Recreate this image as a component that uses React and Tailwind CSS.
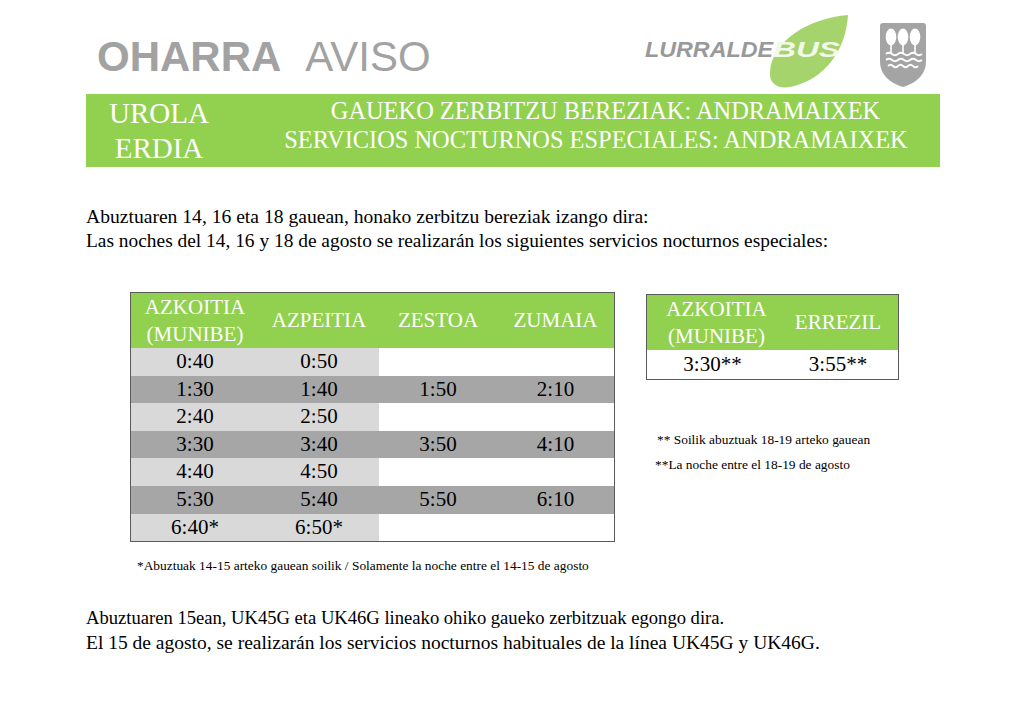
import React from "react";

const serif = { fontFamily: '"Liberation Serif", "Times New Roman", serif' };

function LurraldeLogo() {
  return (
    <svg width="212" height="80" viewBox="0 0 212 80" className="mt-[10px] shrink-0">
      <path d="M 208 5 C 170 8, 132 30, 130 62 C 129 74, 138 79, 150 77 C 185 70, 206 40, 208 5 Z" fill="#a5d46c" />
      <text
        x="5"
        y="47"
        fontFamily='"Liberation Sans", Arial, sans-serif'
        fontWeight="700"
        fontStyle="italic"
        fontSize="22"
        fill="#999999"
        textLength="128"
        lengthAdjust="spacingAndGlyphs"
      >
        LURRALDE
      </text>
      <text
        x="133"
        y="47"
        fontFamily='"Liberation Sans", Arial, sans-serif'
        fontWeight="700"
        fontStyle="italic"
        fontSize="22"
        fill="#f2f8ea"
        textLength="67"
        lengthAdjust="spacingAndGlyphs"
      >
        BUS
      </text>
    </svg>
  );
}

function Shield() {
  return (
    <svg width="46" height="64" viewBox="0 0 46 64" className="mt-[23px] ml-[28px] shrink-0">
      <path d="M0 3 Q0 0 3 0 H43 Q46 0 46 3 V38 C46 52 36 60 23 64 C10 60 0 52 0 38 Z" fill="#a4a4a4" />
      <ellipse cx="11" cy="14" rx="5.3" ry="8.5" fill="#fff" />
      <ellipse cx="23" cy="14" rx="5.3" ry="8.5" fill="#fff" />
      <ellipse cx="35" cy="14" rx="5.3" ry="8.5" fill="#fff" />
      <path d="M11 21 V30 M23 21 V30 M35 21 V30" stroke="#fff" strokeWidth="1.6" />
      <path d="M6 31 q3 -2.5 6 0 t6 0 t6 0 t6 0 t6 0 t6 0" stroke="#fff" strokeWidth="1.8" fill="none" />
      <path d="M6 37 q3 -2.5 6 0 t6 0 t6 0 t6 0 t6 0 t6 0" stroke="#fff" strokeWidth="1.8" fill="none" />
      <path d="M8 43 q2.5 -2.5 5 0 t5 0 t5 0 t5 0 t5 0 t5 0" stroke="#fff" strokeWidth="1.8" fill="none" />
    </svg>
  );
}

const rows = [
  ["0:40", "0:50", "", "", false],
  ["1:30", "1:40", "1:50", "2:10", true],
  ["2:40", "2:50", "", "", false],
  ["3:30", "3:40", "3:50", "4:10", true],
  ["4:40", "4:50", "", "", false],
  ["5:30", "5:40", "5:50", "6:10", true],
  ["6:40*", "6:50*", "", "", false],
];

function MainTable() {
  return (
    <div className="w-[485px] border border-[#5a5a5a] text-[21px]" style={serif}>
      <div className="flex h-[55px] bg-[#92d050] text-white leading-[27px]">
        <div className="w-[128px] flex items-center justify-center text-center">
          AZKOITIA
          <br />
          (MUNIBE)
        </div>
        <div className="w-[120px] flex items-center justify-center">AZPEITIA</div>
        <div className="w-[118px] flex items-center justify-center">ZESTOA</div>
        <div className="w-[117px] flex items-center justify-center">ZUMAIA</div>
      </div>
      {rows.map((r, i) => {
        const dark = r[4];
        return (
          <div key={i} className="flex h-[27.6px] leading-[27.6px] text-black">
            <div className={"w-[128px] text-center " + (dark ? "bg-[#a6a6a6]" : "bg-[#d9d9d9]")}>{r[0]}</div>
            <div className={"w-[120px] text-center " + (dark ? "bg-[#a6a6a6]" : "bg-[#d9d9d9]")}>{r[1]}</div>
            <div className={"w-[118px] text-center " + (dark ? "bg-[#a6a6a6]" : "bg-white")}>{r[2]}</div>
            <div className={"w-[117px] text-center " + (dark ? "bg-[#a6a6a6]" : "bg-white")}>{r[3]}</div>
          </div>
        );
      })}
    </div>
  );
}

function SideTable() {
  return (
    <div className="w-[253px] border border-[#5a5a5a] text-[21px]" style={serif}>
      <div className="flex h-[55px] bg-[#92d050] text-white leading-[27px]">
        <div className="w-[131px] flex items-center justify-center text-center pl-[8px]">
          AZKOITIA
          <br />
          (MUNIBE)
        </div>
        <div className="w-[120px] flex items-center justify-center">ERREZIL</div>
      </div>
      <div className="flex h-[29px] leading-[29px] bg-white text-black">
        <div className="w-[131px] text-center">3:30**</div>
        <div className="w-[120px] text-center">3:55**</div>
      </div>
    </div>
  );
}

export default function App() {
  return (
    <div className="w-[1024px] h-[720px] bg-white overflow-hidden text-black">
      {/* header */}
      <div className="flex items-start h-[94px]">
        <div
          className="w-[640px] shrink-0 pl-[97px] pt-[35px] text-[42px] leading-[43px] text-[#a2a2a2] whitespace-nowrap"
          style={{ fontFamily: '"Liberation Sans", Arial, sans-serif' }}
        >
          <span className="font-bold">OHARRA</span>
          <span className="ml-[24px]">AVISO</span>
        </div>
        <LurraldeLogo />
        <Shield />
      </div>

      {/* green bar */}
      <div className="ml-[86px] w-[854px] h-[73px] bg-[#92d050] flex text-white" style={serif}>
        <div className="w-[146px] flex items-center justify-center text-center text-[29px] leading-[35px]">
          UROLA
          <br />
          ERDIA
        </div>
        <div className="flex-1 flex flex-col items-center justify-center text-[24.4px] leading-[29px] pb-[11px] pl-[20px] whitespace-nowrap">
          <div className="pl-[19px]">GAUEKO ZERBITZU BEREZIAK: ANDRAMAIXEK</div>
          <div>SERVICIOS NOCTURNOS ESPECIALES: ANDRAMAIXEK</div>
        </div>
      </div>

      {/* intro paragraph */}
      <div className="ml-[86px] mt-[38px] text-[19.4px] leading-[24px] whitespace-nowrap" style={serif}>
        <div className="text-[19.6px]">Abuztuaren 14, 16 eta 18 gauean, honako zerbitzu bereziak izango dira:</div>
        <div>Las noches del 14, 16 y 18 de agosto se realizarán los siguientes servicios nocturnos especiales:</div>
      </div>

      {/* tables */}
      <div className="flex items-start mt-[39px] ml-[130px]">
        <div className="flex flex-col">
          <MainTable />
          <div className="mt-[16px] ml-[7px] text-[13.4px] leading-[16px] whitespace-nowrap" style={serif}>
            *Abuztuak 14-15 arteko gauean soilik / Solamente la noche entre el 14-15 de agosto
          </div>
        </div>
        <div className="flex flex-col ml-[31px] mt-[2px]">
          <SideTable />
          <div className="mt-[52px] ml-[11px] text-[13.4px] leading-[16px] whitespace-nowrap" style={serif}>
            ** Soilik abuztuak 18-19 arteko gauean
          </div>
          <div className="mt-[9px] ml-[9px] text-[13.4px] leading-[16px] whitespace-nowrap" style={serif}>
            **La noche entre el 18-19 de agosto
          </div>
        </div>
      </div>

      {/* bottom paragraph */}
      <div className="ml-[86px] mt-[31px] leading-[25px] whitespace-nowrap" style={serif}>
        <div className="text-[18.6px]">Abuztuaren 15ean, UK45G eta UK46G lineako ohiko gaueko zerbitzuak egongo dira.</div>
        <div className="text-[19.5px]">El 15 de agosto, se realizarán los servicios nocturnos habituales de la línea UK45G y UK46G.</div>
      </div>
    </div>
  );
}
